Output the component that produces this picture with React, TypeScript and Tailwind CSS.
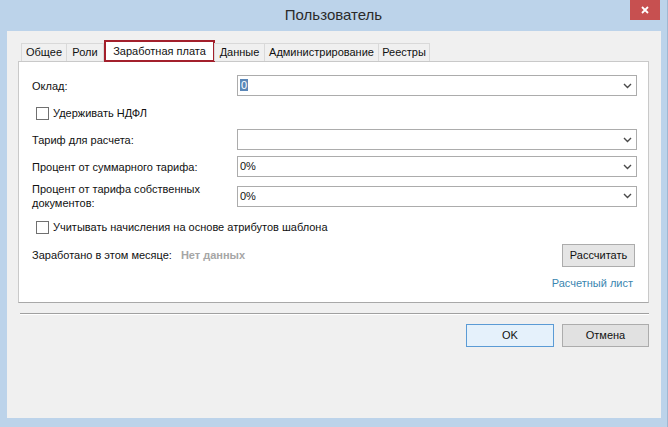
import React from "react";

const font = { fontFamily: '"Liberation Sans", "Noto Sans", Arial, sans-serif' };

function Chevron() {
  return (
    <svg width="9" height="6" viewBox="0 0 9 6" className="shrink-0">
      <path d="M1 1 L4.5 4.5 L8 1" fill="none" stroke="#4a4a4a" strokeWidth="1.4" />
    </svg>
  );
}

function Combo({ value, selected }: { value?: string; selected?: boolean }) {
  return (
    <div className="flex h-[21px] w-[400px] items-center border border-[#acacac] bg-white pl-[2px] pr-[4px]">
      <div className="flex-1 text-[11px] leading-none text-[#111]">
        {selected ? (
          <span className="bg-[#5b87b8] px-[1px] text-white">{value}</span>
        ) : (
          value
        )}
      </div>
      <Chevron />
    </div>
  );
}

function Check({ label }: { label: string }) {
  return (
    <label className="flex h-[13px] items-center gap-[4px] pl-[4px] text-[11px] leading-none text-[#111]">
      <span className="h-[13px] w-[13px] border border-[#707070] bg-white" />
      {label}
    </label>
  );
}

function Row({ label, children }: { label: React.ReactNode; children: React.ReactNode }) {
  return (
    <div className="flex items-center">
      <div className="w-[205px] text-[11px] leading-[14px] text-[#111]">{label}</div>
      {children}
    </div>
  );
}

const tabs = [
  { name: "Общее", w: "w-[46px]" },
  { name: "Роли", w: "w-[38px]" },
  { name: "Заработная плата", w: "w-[111px]", active: true },
  { name: "Данные", w: "w-[51px]" },
  { name: "Администрирование", w: "w-[115px]" },
  { name: "Реестры", w: "w-[52px]" },
];

export default function App() {
  return (
    <div className="flex h-[427px] w-[668px] flex-col border-r border-[#9fb8d2] bg-[#bcd3ea]" style={font}>
      {/* title bar */}
      <div className="relative flex h-[31px] items-center justify-center">
        <span className="text-[15px] text-[#2b2b2b]">Пользователь</span>
        <div className="absolute right-[7px] top-0 flex h-[20px] w-[30px] items-center justify-center bg-[#c75050]">
          <svg width="8" height="8" viewBox="0 0 8 8">
            <path d="M1 1 L7 7 M7 1 L1 7" stroke="white" strokeWidth="1.8" />
          </svg>
        </div>
      </div>

      {/* client */}
      <div className="ml-[7px] mr-[6px] mb-[9px] flex flex-1 flex-col bg-[#f0f0f0] pl-[11px] pr-[12px] pt-[12px]">
        {/* tabs */}
        <div className="relative z-10 flex h-[18px] items-end pl-[4px]">
          {tabs.map((t) =>
            t.active ? (
              <div
                key={t.name}
                className={`${t.w} -mb-[1px] flex h-[22px] items-center justify-center border-2 border-[#a3202c] bg-white text-[11px] text-[#111]`}
              >
                {t.name}
              </div>
            ) : (
              <div
                key={t.name}
                className={`${t.w} -ml-[1px] flex h-[18px] items-center justify-center border border-b-0 border-[#d9d9d9] bg-[#f0f0f0] text-[11px] text-[#111]`}
              >
                {t.name}
              </div>
            )
          )}
        </div>

        {/* panel */}
        <div className="flex h-[242px] flex-col border border-[#c9c9c9] border-b-[#a8a8a8] bg-white pl-[13px] pr-[8px] pt-[13px]">
          <Row label="Оклад:">
            <Combo value="0" selected />
          </Row>
          <div className="mt-[11px]">
            <Check label="Удерживать НДФЛ" />
          </div>
          <div className="mt-[9px]">
            <Row label="Тариф для расчета:">
              <Combo />
            </Row>
          </div>
          <div className="mt-[6px]">
            <Row label="Процент от суммарного тарифа:">
              <Combo value="0%" />
            </Row>
          </div>
          <div className="mt-[5px]">
            <Row
              label={
                <>
                  Процент от тарифа собственных
                  <br />
                  документов:
                </>
              }
            >
              <Combo value="0%" />
            </Row>
          </div>
          <div className="mt-[11px]">
            <Check label="Учитывать начисления на основе атрибутов шаблона" />
          </div>
          <div className="mt-[10px] flex h-[23px] items-center justify-between pr-[5px]">
            <div className="flex items-center gap-[9px] text-[11px]">
              <span className="text-[#111]">Заработано в этом месяце:</span>
              <span className="font-bold text-[#a6a6a6]">Нет данных</span>
            </div>
            <button className="h-[23px] w-[73px] border border-[#acacac] bg-[#e5e5e5] text-[11px] text-[#111]">
              Рассчитать
            </button>
          </div>
          <div className="mt-[9px] flex h-[14px] items-center justify-end pr-[7px]">
            <span className="text-[11px] leading-none text-[#3a86b0]">Расчетный лист</span>
          </div>
        </div>

        {/* separator */}
        <div className="mr-[0px] ml-[2px] mt-[10px] h-[2px] border-t border-[#a0a0a0] bg-white" />

        {/* buttons */}
        <div className="mr-[0px] mt-[9px] flex justify-end gap-[8px]">
          <button className="h-[23px] w-[88px] border border-[#5b9bd5] bg-[#e5f1fb] text-[11px] text-[#111]">
            OK
          </button>
          <button className="h-[23px] w-[87px] border border-[#acacac] bg-[#e1e1e1] text-[11px] text-[#111]">
            Отмена
          </button>
        </div>
      </div>
    </div>
  );
}
